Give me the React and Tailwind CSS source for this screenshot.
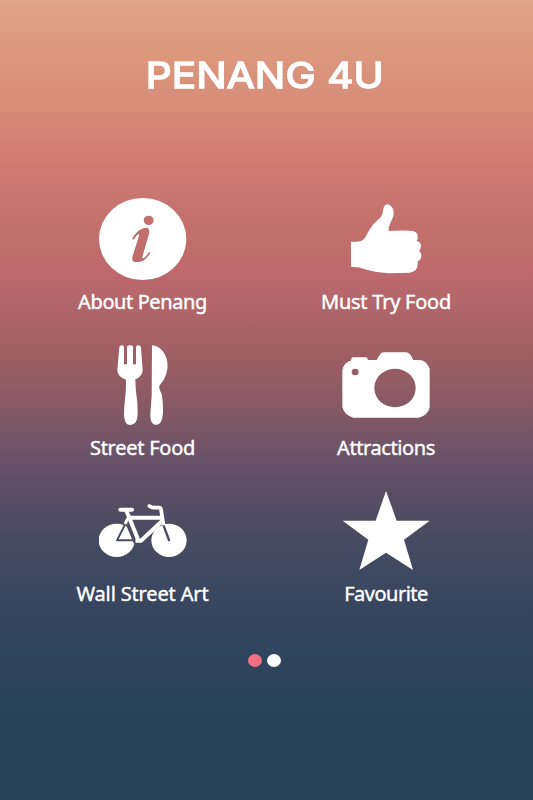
import { useState } from "react";

const InfoIcon = () => (
  <svg viewBox="27 15 264 264" className="h-[88px] w-[88px]" fill="currentColor">
    <path
      fillRule="evenodd"
      d="M27 147 A131 123 0 0 1 289 147 A131 123 0 0 1 27 147 Z
      M161 91 A15 14 0 0 0 191 91 A15 14 0 0 0 161 91 Z
      M126 147 Q137 124 159 115 Q178 109 178 124 Q178 130 174 142 L158 197 Q155 206 160 205 Q168 201 177 186 L181 188 Q171 207 157 213 Q145 218 132 215 Q124 211 128 197 L146 141 Q149 132 145 132 Q139 136 131 149 Z"
    />
  </svg>
);

const ThumbIcon = () => (
  <svg viewBox="6 0 264 264" className="h-[88px] w-[88px]" fill="currentColor">
    <path d="M33 140 H50 Q67 141 76 127 Q88 102 101 86 L122 67 Q129 58 130 42 Q132 28 144 28 Q161 34 161 54 Q161 65 151 84 Q145 97 146 108 Q180 105 212 107 Q233 109 233 122 Q234 132 230 138 Q243 141 243 153 Q243 163 237 168 Q245 173 244 183 Q243 195 233 199 Q236 232 208 233 L146 235 Q112 234 83 225 Q57 215 33 215 Z" />
  </svg>
);

const CutleryIcon = () => (
  <svg viewBox="-18 18 264 264" className="h-[88px] w-[88px]" fill="currentColor">
    <path d="M43 36 Q45 31 50 31 Q57 31 57 37 V88 H66 V37 Q66 31 75 31 Q84 31 84 37 V88 H93 V37 Q93 31 100 31 Q107 31 108 38 L113 105 Q113 124 91 133 Q91 165 97 202 L98 238 Q97 270 76 270 Q58 270 57 240 Q57 218 60 194 Q64 162 63 134 Q37 125 37 106 Z" />
    <path d="M141 31 Q177 35 187 80 Q192 119 164 151 Q160 160 169 174 Q174 190 174 234 Q172 270 153 270 Q135 270 136 238 L140 183 Z" />
  </svg>
);

const CameraIcon = () => (
  <svg viewBox="21 -12 264 264" className="h-[88px] w-[88px]" fill="currentColor">
    <path
      fillRule="evenodd"
      d="M49 46 V42 Q49 37 54 37 H93 Q98 37 98 42 V45 H125 Q130 35 137 26 Q141 22 148 22 H213 Q220 22 224 27 Q232 36 234 45 H251 Q275 45 284 72 V187 Q278 213 251 218 H55 Q29 211 22 187 V76 Q27 52 49 46 Z
      M50 81 A10.500 10 0 0 0 71 81 A10.500 10 0 0 0 50 81 Z
      M118 129 A62 58 0 0 0 242 129 A62 58 0 0 0 118 129 Z"
    />
  </svg>
);

const BikeIcon = () => (
  <svg viewBox="27 -9 264 264" className="h-[88px] w-[88px]" fill="none" stroke="currentColor" strokeLinejoin="round">
    {/* the frame is cut out where it crosses the wheels */}
    <mask id="wheels" maskUnits="userSpaceOnUse" x="0" y="0" width="320" height="240">
      <g fill="white" stroke="none">
        <ellipse cx="80" cy="151" rx="54" ry="50" />
        <ellipse cx="237" cy="151" rx="53" ry="50" />
      </g>
      <g stroke="black">
        <path d="M108 98 L81 151 H137" strokeWidth="6" />
        <path d="M112 90 L140 158" strokeWidth="18" />
        <path d="M213 86 L238 153" strokeWidth="7" />
        <path d="M150 149 L216 88" strokeWidth="18" />
      </g>
    </mask>
    <rect x="0" y="0" width="320" height="240" fill="currentColor" stroke="none" mask="url(#wheels)" />
    <path d="M91 59 H126" strokeWidth="12" strokeLinecap="round" />
    <path d="M108 60 L118 83 L145 151 H137" strokeWidth="12" />
    <path d="M105 102 L118 77" strokeWidth="9" />
    <path d="M117 83 H215" strokeWidth="12" />
    <path d="M137 152 H153 L217 92" strokeWidth="12" />
    <path d="M178 48 Q185 53 193 53 H208 Q212 53 213 58 L220 101" strokeWidth="11" strokeLinecap="round" />
  </svg>
);

const StarIcon = () => (
  <svg viewBox="21 6 264 264" className="h-[88px] w-[88px]" fill="currentColor">
    <path d="M153 18 L185 107 H284 L207 164 L234 255 L153 203 L73 255 L100 164 L23 107 H122 Z" />
  </svg>
);

const menu = [
  { label: "About Penang", Icon: InfoIcon, spacing: "tracking-[-0.4px]" },
  { label: "Must Try Food", Icon: ThumbIcon, spacing: "tracking-[-0.25px]" },
  { label: "Street Food", Icon: CutleryIcon, spacing: "tracking-[-0.25px]" },
  { label: "Attractions", Icon: CameraIcon, spacing: "tracking-[-0.4px]" },
  { label: "Wall Street Art", Icon: BikeIcon, spacing: "tracking-[-0.15px]" },
  { label: "Favourite", Icon: StarIcon, spacing: "tracking-[-0.5px]" },
];

const App = () => {
  const [page, setPage] = useState(0);

  return (
    <div className="h-[800px] w-[533px] overflow-hidden bg-[linear-gradient(180deg,#e0a486_0px,#dc997c_50px,#d88d7a_100px,#d37f74_150px,#c87470_200px,#c06e6b_245px,#bf696d_270px,#b3676a_300px,#a05f64_350px,#8a5a66_400px,#785665_430px,#6a5268_460px,#574d62_500px,#444a62_550px,#38465f_600px,#30455e_650px,#2a445b_700px,#28425a_800px)] font-['Noto_Sans','Open_Sans',sans-serif] text-white">
      <h1 className="flex h-[195px] scale-x-114 justify-center pt-[51px] pr-[3px] font-['Inter',sans-serif] text-[35.5px] leading-[50px] font-normal tracking-[0.1px] [-webkit-text-stroke:1.5px_white] [paint-order:stroke] [stroke-linejoin:round]">
        PENANG 4U
      </h1>

      <div className="ml-[20.75px] grid w-[487px] grid-cols-2">
        {menu.map(({ label, Icon, spacing }) => (
          <button key={label} className="flex h-[146px] flex-col items-center">
            <Icon />
            <span
              className={`mt-[3.5px] text-[20px] leading-[30px] font-normal whitespace-nowrap [-webkit-text-stroke:0.4px_white] ${spacing}`}
            >
              {label}
            </span>
          </button>
        ))}
      </div>

      <div className="flex justify-center gap-[5px] pt-[21px] pr-[4px]">
        {[0, 1].map((i) => (
          <button
            key={i}
            onClick={() => setPage(i)}
            className={`h-[13px] w-[14px] rounded-[50%] ${page === i ? "bg-[#f06f83]" : "bg-white"}`}
          />
        ))}
      </div>
    </div>
  );
};

export default App;
